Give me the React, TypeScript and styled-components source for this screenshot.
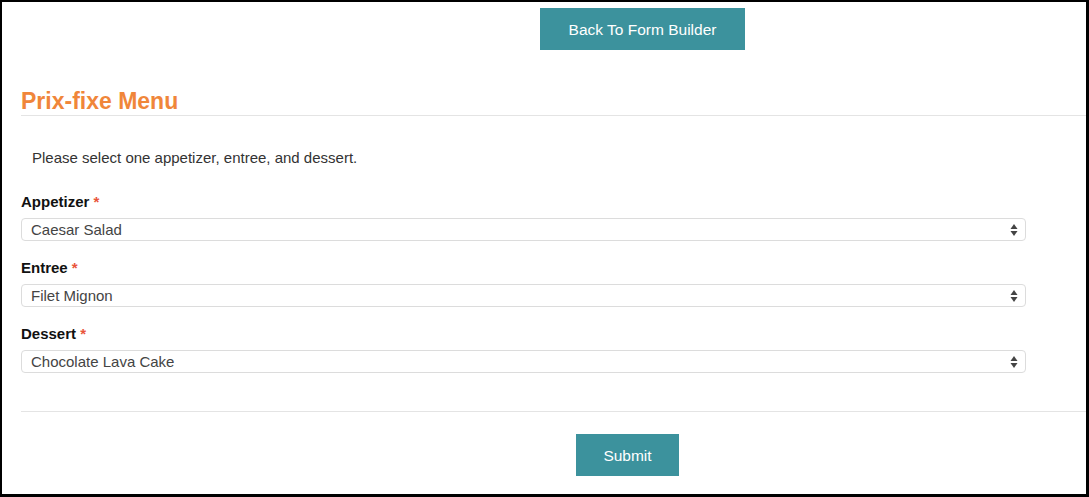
import * as React from "react";
import styled, { createGlobalStyle } from "styled-components";

const GlobalStyle = createGlobalStyle`
  html, body {
    margin: 0;
    padding: 0;
    background: #fff;
    font-family: "Liberation Sans", Arial, Helvetica, sans-serif;
  }
  * { box-sizing: border-box; }
`;

interface Field {
  label: string;
  value: string;
}

const fields: Field[] = [
  { label: "Appetizer", value: "Caesar Salad" },
  { label: "Entree", value: "Filet Mignon" },
  { label: "Dessert", value: "Chocolate Lava Cake" },
];

const SelectArrows = () => (
  <svg width="8" height="14" viewBox="0 0 8 14">
    <path d="M4 1 L7.5 6 L0.5 6 Z" fill="#444" />
    <path d="M4 13 L7.5 8 L0.5 8 Z" fill="#444" />
  </svg>
);

export default function App() {
  return (
    <Frame>
      <GlobalStyle />
      <TopBar>
        <Button width={205}>Back To Form Builder</Button>
      </TopBar>
      <Title>Prix-fixe Menu</Title>
      <Description>Please select one appetizer, entree, and dessert.</Description>
      <FieldList>
        {fields.map(f => (
          <FieldGroup key={f.label}>
            <Label>
              {f.label} <Required>*</Required>
            </Label>
            <Select>
              <span>{f.value}</span>
              <SelectArrows />
            </Select>
          </FieldGroup>
        ))}
      </FieldList>
      <Footer>
        <Button width={103}>Submit</Button>
      </Footer>
    </Frame>
  );
}

const Frame = styled.div`
  width: 1089px;
  height: 497px;
  border: 2px solid #000;
  border-right-width: 3px;
  border-bottom-width: 3px;
  display: flex;
  flex-direction: column;
  overflow: hidden;
`;

const TopBar = styled.div`
  padding: 6px 0 0 538px;
`;

const Button = styled.button<{ width: number }>`
  width: ${p => p.width}px;
  height: 42px;
  border: none;
  border-radius: 0;
  background: #3c929d;
  color: #fff;
  font-family: "Liberation Sans", Arial, sans-serif;
  font-size: 15.5px;
  padding: 1px 0 0;
  cursor: pointer;
`;

const Title = styled.h2`
  margin: 37px 0 0 19px;
  padding-bottom: 0;
  font-size: 23px;
  line-height: 28px;
  font-weight: bold;
  color: #f0863a;
  border-bottom: 1px solid #e4e4e4;
`;

const Description = styled.p`
  margin: 32px 0 0 30px;
  font-size: 15px;
  line-height: 20px;
  color: #333;
`;

const FieldList = styled.div`
  margin: 24px 0 0 19px;
  display: flex;
  flex-direction: column;
  gap: 17px;
`;

const FieldGroup = styled.div`
  display: flex;
  flex-direction: column;
  gap: 6px;
`;

const Label = styled.label`
  font-size: 15px;
  line-height: 20px;
  font-weight: bold;
  color: #111;
`;

const Required = styled.span`
  color: #e9553b;
`;

const Select = styled.div`
  width: 1005px;
  height: 23px;
  border: 1px solid #dcdcdc;
  border-radius: 4px;
  display: flex;
  align-items: center;
  justify-content: space-between;
  padding: 0 7px 0 9px;
  font-size: 15px;
  color: #444;
`;

const Footer = styled.div`
  margin: 38px 0 0 19px;
  border-top: 1px solid #e4e4e4;
  padding: 22px 0 0 555px;
`;
